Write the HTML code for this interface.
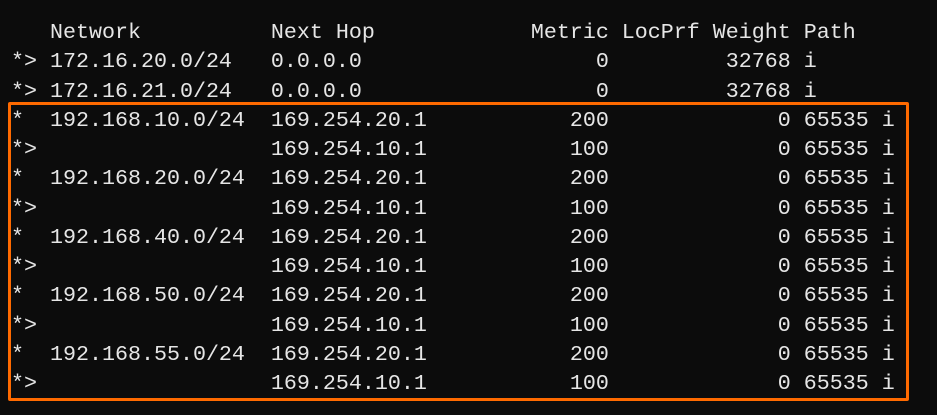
<!DOCTYPE html>
<html><head><style>
html,body{margin:0;padding:0;background:#0c0c0c;width:937px;height:415px;overflow:hidden;}
pre{position:absolute;left:11px;top:18px;margin:0;font-family:"Liberation Mono",monospace;font-size:21.67px;line-height:29.25px;color:#e6e6e6;}
.box{position:absolute;left:8px;top:102px;width:895px;height:293px;border:3px solid #ff6a00;border-radius:2px;}
</style></head><body>
<pre>   Network          Next Hop            Metric LocPrf Weight Path
*&gt; 172.16.20.0/24   0.0.0.0                  0         32768 i
*&gt; 172.16.21.0/24   0.0.0.0                  0         32768 i
*  192.168.10.0/24  169.254.20.1           200             0 65535 i
*&gt;                  169.254.10.1           100             0 65535 i
*  192.168.20.0/24  169.254.20.1           200             0 65535 i
*&gt;                  169.254.10.1           100             0 65535 i
*  192.168.40.0/24  169.254.20.1           200             0 65535 i
*&gt;                  169.254.10.1           100             0 65535 i
*  192.168.50.0/24  169.254.20.1           200             0 65535 i
*&gt;                  169.254.10.1           100             0 65535 i
*  192.168.55.0/24  169.254.20.1           200             0 65535 i
*&gt;                  169.254.10.1           100             0 65535 i</pre>
<div class="box"></div>
</body></html>
